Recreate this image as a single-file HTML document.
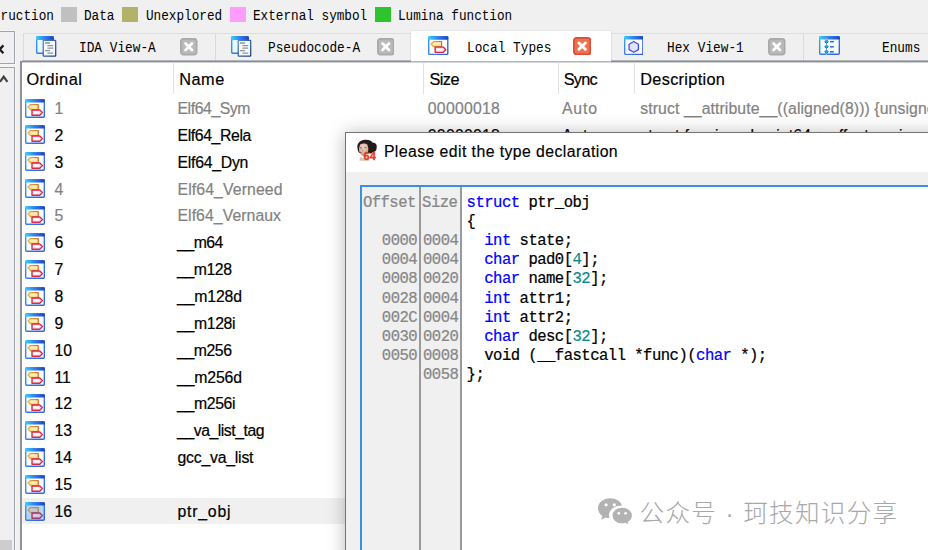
<!DOCTYPE html>
<html lang="en">
<head>
<meta charset="utf-8">
<title>Local Types</title>
<style>
html,body{margin:0;padding:0;}
body{width:928px;height:550px;overflow:hidden;background:#f0f0f0;position:relative;font-family:"Liberation Sans",sans-serif;color:#000;}
.abs{position:absolute;}
.mono{font-family:"Liberation Mono",monospace;}
/* legend */
.lg{position:absolute;top:8.7px;height:16px;line-height:16px;font-family:"Liberation Mono",monospace;font-size:12.7px;white-space:pre;color:#000;transform:scaleY(1.14);transform-origin:0 50%;}
.sw{position:absolute;top:6.5px;width:16px;height:15px;}
/* left gutter */
.gbox{position:absolute;left:-3.7px;width:16.4px;border:1.3px solid #9fa3aa;background:#f0f0f0;box-shadow:0 0 0 1px #f7f7f7;}
/* tabs */
#tabbar{position:absolute;left:23px;top:33.4px;width:910px;height:27px;border-top:1px solid #dddddd;border-left:1px solid #dcdcdc;background:#f0f0f0;}
.tsep{position:absolute;top:34px;width:1px;height:26px;background:#dadada;}
.ttxt{position:absolute;top:40.4px;height:18px;line-height:18px;font-family:"Liberation Mono",monospace;font-size:12.8px;white-space:pre;color:#000;transform:scaleY(1.08);transform-origin:0 50%;}
.tclose{position:absolute;top:38.3px;width:14.6px;height:14.6px;border:1.7px solid #a9a9a9;border-radius:2.6px;background:#bababa;}
.tclose.red{background:#e9704e;border-color:#de4c38;top:36.8px;width:14.9px;height:14.9px;}
.tclose svg{position:absolute;left:-0.7px;top:-0.7px;}
#acttab{position:absolute;left:411px;top:31px;width:200px;height:30px;background:#fff;box-shadow:0 -1px 0 0 #e6e6e6,-1px 0 0 0 #e2e2e2,1px 0 0 0 #e2e2e2;}
/* list */
#list{position:absolute;left:19.6px;top:60.6px;width:920px;height:500px;background:#fff;border-left:2px solid #8d9198;}
#hline{position:absolute;left:22px;top:60px;width:910px;height:3px;background:linear-gradient(#b2b5bb 0,#b2b5bb 33.3%,#868b94 33.3%,#868b94 66.6%,#cfd1d5 66.6%,#cfd1d5 100%);}
#hline2{position:absolute;left:411px;top:60px;width:200px;height:3px;background:linear-gradient(#fff 0,#fff 33.3%,#b2b6bd 33.3%,#b2b6bd 66.6%,#d2d5d9 66.6%,#d2d5d9 100%);}
.hsep{position:absolute;top:62px;width:1px;height:32px;background:#e0e0e0;}
.hd{position:absolute;top:67.6px;height:22px;line-height:22px;font-size:16.3px;white-space:pre;color:#000;-webkit-text-stroke:0.2px #000;}
.row{position:absolute;left:22px;width:906px;height:26px;}
.c{position:absolute;top:0.9px;height:26px;line-height:26px;font-size:15.8px;white-space:pre;-webkit-text-stroke:0.2px currentColor;}
.g .c{color:#828282;}
.ico{position:absolute;left:3.4px;top:3.5px;width:20px;height:19px;}
/* dialog */
#dlg{position:absolute;left:345px;top:131.6px;width:640px;height:460px;background:#f0f0f0;border:1px solid #747474;box-shadow:0 1px 17px 0 rgba(0,0,0,.27);}
#dtitle{position:absolute;left:0;top:0;width:100%;height:39px;background:#fff;}
#dtitle span{position:absolute;left:37.9px;top:9.6px;height:20px;line-height:20px;font-size:15.8px;letter-spacing:0.43px;white-space:pre;-webkit-text-stroke:0.15px #000;}
#ed{position:absolute;left:14.3px;top:52.6px;width:640px;height:420px;border:2.1px solid #3c8fdc;background:#fff;}
#ed .col1{position:absolute;left:0;top:0;width:56.8px;height:100%;background:#f0f0f0;border-right:2px solid #9a9a9a;}
#ed .col2{position:absolute;left:58.8px;top:0;width:38.7px;height:100%;background:#f0f0f0;border-right:2px solid #9a9a9a;}
.ln{position:absolute;left:0;height:19px;line-height:19px;font-family:"Liberation Mono",monospace;font-size:15.6px;letter-spacing:-0.532px;white-space:pre;-webkit-text-stroke:0.22px currentColor;}
.ln span{position:absolute;top:0;}
.of{left:1.9px;color:#868686;}
.sz{left:60.7px;color:#868686;}
.cd{left:104.3px;color:#000;}
.k{color:#0000ff;font-style:normal;}
.n{color:#0a8a8a;font-style:normal;}
/* watermark */
#wm{position:absolute;left:639.5px;top:498.9px;height:30px;line-height:30px;font-family:"Liberation Sans","Noto Sans CJK SC",sans-serif;font-size:24.6px;letter-spacing:1.3px;word-spacing:0.1px;font-weight:300;color:#a8a8a8;white-space:pre;}
</style>
</head>
<body>
<!-- legend strip -->
<div class="lg" style="left:-7px">truction</div>
<div class="sw" style="left:61px;background:#c0c0c0"></div>
<div class="lg" style="left:84px">Data</div>
<div class="sw" style="left:122px;background:#b2b26a"></div>
<div class="lg" style="left:146px">Unexplored</div>
<div class="sw" style="left:230px;background:#ff9cff"></div>
<div class="lg" style="left:253px">External symbol</div>
<div class="sw" style="left:375px;background:#2ec42e"></div>
<div class="lg" style="left:398px">Lumina function</div>

<!-- left gutter -->
<div class="gbox" style="top:31px;height:31px"></div>
<div class="gbox" style="top:67px;height:500px"></div>
<div class="abs" style="left:0;top:539.5px;width:12.3px;height:12px;background:#cdcdcd"></div>
<svg class="abs" style="left:0;top:40px" width="14" height="50" viewBox="0 0 14 50">
  <path d="M-4 5.4 L3.4 13.2 M3.4 5.4 L-4 13.2" stroke="#1c1c1c" stroke-width="2.3" fill="none"/>
  <path d="M0 41.8 L3.7 36.7 L7.4 41.8" stroke="#404040" stroke-width="2.2" fill="none"/>
</svg>

<!-- tab bar -->
<div id="tabbar"></div>
<div id="acttab"></div>
<div id="list"></div>
<div id="hline"></div>
<div id="hline2"></div>
<div class="tsep" style="left:215px"></div>
<div class="tsep" style="left:803px"></div>

<div class="ttxt" style="left:79px">IDA View-A</div>
<div class="ttxt" style="left:268px">Pseudocode-A</div>
<div class="ttxt" style="left:467px">Local Types</div>
<div class="ttxt" style="left:667px">Hex View-1</div>
<div class="ttxt" style="left:882px">Enums</div>


<svg class="abs" style="left:180.4px;top:38.4px" width="17.5" height="17.5" viewBox="0 0 17.5 17.5"><rect x="0.85" y="0.85" width="15.8" height="15.8" rx="2.6" fill="#bababa" stroke="#a9a9a9" stroke-width="1.7"/><path d="M5.55 5.55L11.95 11.95M11.95 5.55L5.55 11.95" stroke="#fff" stroke-width="2.7" stroke-linecap="round"/></svg>
<svg class="abs" style="left:376.9px;top:38.4px" width="17.5" height="17.5" viewBox="0 0 17.5 17.5"><rect x="0.85" y="0.85" width="15.8" height="15.8" rx="2.6" fill="#bababa" stroke="#a9a9a9" stroke-width="1.7"/><path d="M5.55 5.55L11.95 11.95M11.95 5.55L5.55 11.95" stroke="#fff" stroke-width="2.7" stroke-linecap="round"/></svg>
<svg class="abs" style="left:572.5px;top:36.7px" width="18.3" height="18.3" viewBox="0 0 18.3 18.3"><rect x="0.9" y="0.9" width="16.5" height="16.5" rx="2.6" fill="#ea7450" stroke="#de4c38" stroke-width="1.8"/><path d="M5.95 5.95L12.350000000000001 12.350000000000001M12.350000000000001 5.95L5.95 12.350000000000001" stroke="#fff" stroke-width="2.9" stroke-linecap="round"/></svg>
<svg class="abs" style="left:768.2px;top:38.4px" width="17.5" height="17.5" viewBox="0 0 17.5 17.5"><rect x="0.85" y="0.85" width="15.8" height="15.8" rx="2.6" fill="#bababa" stroke="#a9a9a9" stroke-width="1.7"/><path d="M5.55 5.55L11.95 11.95M11.95 5.55L5.55 11.95" stroke="#fff" stroke-width="2.7" stroke-linecap="round"/></svg>
<svg class="abs" style="left:35.7px;top:35.7px" width="21" height="21" viewBox="0 0 21 21"><defs><linearGradient id="tb1" x1="0" y1="0" x2="1" y2="0"><stop offset="0" stop-color="#38d4ff"/><stop offset=".45" stop-color="#2f86ea"/><stop offset="1" stop-color="#1f3fc8"/></linearGradient><linearGradient id="fr1" x1="0" y1="0" x2="1" y2="1"><stop offset="0" stop-color="#3f9ff2"/><stop offset="1" stop-color="#3460dc"/></linearGradient></defs><rect x="0.7" y="0.7" width="16.6" height="16.6" rx="1" fill="#e8fbff" stroke="url(#fr1)" stroke-width="1.4"/><rect x="0.2" y="0.2" width="17.6" height="3.8" rx="0.8" fill="url(#tb1)"/><linearGradient id="dg1" x1="0" y1="0" x2="1" y2="1"><stop offset="0" stop-color="#4f84c8"/><stop offset="1" stop-color="#173f7c"/></linearGradient><rect x="7.2" y="4.4" width="12.5" height="15.6" rx=".6" fill="#f6faff" stroke="url(#dg1)" stroke-width="1.25"/><path d="M9 7H14M11.4 9.7H17.2M11.4 12.2H17.2M9 14.6H14M11.4 17.1H17.2" stroke="#8c949c" stroke-width="1.3"/></svg>
<svg class="abs" style="left:231.4px;top:35.7px" width="21" height="21" viewBox="0 0 21 21"><defs><linearGradient id="tb2" x1="0" y1="0" x2="1" y2="0"><stop offset="0" stop-color="#38d4ff"/><stop offset=".45" stop-color="#2f86ea"/><stop offset="1" stop-color="#1f3fc8"/></linearGradient><linearGradient id="fr2" x1="0" y1="0" x2="1" y2="1"><stop offset="0" stop-color="#3f9ff2"/><stop offset="1" stop-color="#3460dc"/></linearGradient></defs><rect x="0.7" y="0.7" width="16.6" height="16.6" rx="1" fill="#e8fbff" stroke="url(#fr2)" stroke-width="1.4"/><rect x="0.2" y="0.2" width="17.6" height="3.8" rx="0.8" fill="url(#tb2)"/><linearGradient id="dg2" x1="0" y1="0" x2="1" y2="1"><stop offset="0" stop-color="#4f84c8"/><stop offset="1" stop-color="#173f7c"/></linearGradient><rect x="7.2" y="4.4" width="12.5" height="15.6" rx=".6" fill="#f6faff" stroke="url(#dg2)" stroke-width="1.25"/><path d="M9 7H14M11.4 9.7H17.2M11.4 12.2H17.2M9 14.6H14M11.4 17.1H17.2" stroke="#8c949c" stroke-width="1.3"/></svg>
<svg class="abs" style="left:428.4px;top:36px" width="20.5" height="19.2" viewBox="0 0 20 19" preserveAspectRatio="none"><defs><linearGradient id="tb3" x1="0" y1="0" x2="1" y2="0"><stop offset="0" stop-color="#38d4ff"/><stop offset=".45" stop-color="#2f86ea"/><stop offset="1" stop-color="#1f3fc8"/></linearGradient><linearGradient id="fr3" x1="0" y1="0" x2="1" y2="1"><stop offset="0" stop-color="#3f9ff2"/><stop offset="1" stop-color="#3460dc"/></linearGradient><linearGradient id="og3" x1="0" y1="0" x2="1" y2="0"><stop offset="0" stop-color="#eeb040"/><stop offset="1" stop-color="#de6c1c"/></linearGradient><linearGradient id="of3" x1="0" y1="0" x2="0" y2="1"><stop offset="0" stop-color="#fffdf0"/><stop offset="1" stop-color="#ffdc70"/></linearGradient></defs><rect x="0.7" y="0.7" width="18.6" height="17.6" rx="1" fill="#fdffff" stroke="url(#fr3)" stroke-width="1.4"/><rect x="0.2" y="0.2" width="19.6" height="3.4" rx="0.8" fill="url(#tb3)"/><path d="M3 8 L5.6 5.6 H13.2 V10.6 H5.6 Z" fill="url(#of3)" stroke="url(#og3)" stroke-width="1.3" stroke-linejoin="round"/><path d="M7 11 H14.8 L17.4 13.6 L14.8 16.2 H7 Z" fill="#fbe4ea" stroke="#d22e4c" stroke-width="1.4" stroke-linejoin="round"/><path d="M8.6 13.6H14" stroke="#fff" stroke-width="1.6" opacity="0.9"/></svg>
<svg class="abs" style="left:623.5px;top:35.8px" width="19.5" height="19.1" viewBox="0 0 20 19" preserveAspectRatio="none"><defs><linearGradient id="tb4" x1="0" y1="0" x2="1" y2="0"><stop offset="0" stop-color="#38d4ff"/><stop offset=".45" stop-color="#2f86ea"/><stop offset="1" stop-color="#1f3fc8"/></linearGradient><linearGradient id="fr4" x1="0" y1="0" x2="1" y2="1"><stop offset="0" stop-color="#3f9ff2"/><stop offset="1" stop-color="#3460dc"/></linearGradient></defs><rect x="0.7" y="0.7" width="18.6" height="17.6" rx="1" fill="#fff" stroke="url(#fr4)" stroke-width="1.4"/><rect x="0.2" y="0.2" width="19.6" height="3.4" rx="0.8" fill="url(#tb4)"/><path d="M10 5.5 L14.8 8.2 V13.5 L10 16.2 L5.2 13.5 V8.2 Z" fill="#dde9fb" stroke="#4848ff" stroke-width="1.35" stroke-linejoin="round"/></svg>
<svg class="abs" style="left:819.1px;top:35.8px" width="21" height="19" viewBox="0 0 21 19"><defs><linearGradient id="tb5" x1="0" y1="0" x2="1" y2="0"><stop offset="0" stop-color="#38d4ff"/><stop offset=".45" stop-color="#2f86ea"/><stop offset="1" stop-color="#1f3fc8"/></linearGradient><linearGradient id="fr5" x1="0" y1="0" x2="1" y2="1"><stop offset="0" stop-color="#3f9ff2"/><stop offset="1" stop-color="#3460dc"/></linearGradient></defs><rect x="0.7" y="0.7" width="19.6" height="17.6" rx="1" fill="#f4fdff" stroke="url(#fr5)" stroke-width="1.4"/><rect x="0.2" y="0.2" width="20.6" height="3.4" rx="0.8" fill="url(#tb5)"/><path d="M7.5 2V19" stroke="#d8c8f4" stroke-width="0.8"/><path d="M7.5 3.9000000000000004 L9.3 5.7 L7.5 7.5 L5.7 5.7 Z" fill="#00b4e6" stroke="#2a6cd8" stroke-width="1"/><path d="M11 5.7H14.8" stroke="#2a62de" stroke-width="1.5"/><path d="M7.5 9.0 L9.3 10.8 L7.5 12.600000000000001 L5.7 10.8 Z" fill="#00b4e6" stroke="#2a6cd8" stroke-width="1"/><path d="M11 10.8H14.8" stroke="#2a62de" stroke-width="1.5"/><path d="M7.5 14.0 L9.3 15.8 L7.5 17.6 L5.7 15.8 Z" fill="#00b4e6" stroke="#2a6cd8" stroke-width="1"/><path d="M11 15.8H14.8" stroke="#2a62de" stroke-width="1.5"/></svg>

<!-- list header -->
<div class="hsep" style="left:173px"></div>
<div class="hsep" style="left:423px"></div>
<div class="hsep" style="left:558px"></div>
<div class="hsep" style="left:634px"></div>

<div class="hd" style="left:26.4px;letter-spacing:0.492px">Ordinal</div>
<div class="hd" style="left:179.2px;letter-spacing:0.540px">Name</div>
<div class="hd" style="left:429.4px;letter-spacing:-0.536px">Size</div>
<div class="hd" style="left:563.7px;letter-spacing:-0.779px">Sync</div>
<div class="hd" style="left:640.3px;letter-spacing:0.307px">Description</div>
<div class="row g" style="top:95.00px"><svg class="ico" style="" width="20.5" height="19.2" viewBox="0 0 20 19" preserveAspectRatio="none"><defs><linearGradient id="tb6" x1="0" y1="0" x2="1" y2="0"><stop offset="0" stop-color="#38d4ff"/><stop offset=".45" stop-color="#2f86ea"/><stop offset="1" stop-color="#1f3fc8"/></linearGradient><linearGradient id="fr6" x1="0" y1="0" x2="1" y2="1"><stop offset="0" stop-color="#3f9ff2"/><stop offset="1" stop-color="#3460dc"/></linearGradient><linearGradient id="og6" x1="0" y1="0" x2="1" y2="0"><stop offset="0" stop-color="#eeb040"/><stop offset="1" stop-color="#de6c1c"/></linearGradient><linearGradient id="of6" x1="0" y1="0" x2="0" y2="1"><stop offset="0" stop-color="#fffdf0"/><stop offset="1" stop-color="#ffdc70"/></linearGradient></defs><rect x="0.7" y="0.7" width="18.6" height="17.6" rx="1" fill="#fdffff" stroke="url(#fr6)" stroke-width="1.4"/><rect x="0.2" y="0.2" width="19.6" height="3.4" rx="0.8" fill="url(#tb6)"/><path d="M3 8 L5.6 5.6 H13.2 V10.6 H5.6 Z" fill="url(#of6)" stroke="url(#og6)" stroke-width="1.3" stroke-linejoin="round"/><path d="M7 11 H14.8 L17.4 13.6 L14.8 16.2 H7 Z" fill="#fbe4ea" stroke="#d22e4c" stroke-width="1.4" stroke-linejoin="round"/><path d="M8.6 13.6H14" stroke="#fff" stroke-width="1.6" opacity="0.9"/></svg><span class="c" style="left:32.4px">1</span><span class="c" style="left:155.5px;letter-spacing:-0.425px">Elf64_Sym</span><span class="c" style="left:405.8px;letter-spacing:0.257px">00000018</span><span class="c" style="left:539.9px;letter-spacing:0.899px">Auto</span><span class="c" style="left:618.3px;letter-spacing:0.090px">struct __attribute__((aligned(8))) {unsigne</span></div>
<div class="row" style="top:121.87px"><svg class="ico" style="" width="20.5" height="19.2" viewBox="0 0 20 19" preserveAspectRatio="none"><defs><linearGradient id="tb7" x1="0" y1="0" x2="1" y2="0"><stop offset="0" stop-color="#38d4ff"/><stop offset=".45" stop-color="#2f86ea"/><stop offset="1" stop-color="#1f3fc8"/></linearGradient><linearGradient id="fr7" x1="0" y1="0" x2="1" y2="1"><stop offset="0" stop-color="#3f9ff2"/><stop offset="1" stop-color="#3460dc"/></linearGradient><linearGradient id="og7" x1="0" y1="0" x2="1" y2="0"><stop offset="0" stop-color="#eeb040"/><stop offset="1" stop-color="#de6c1c"/></linearGradient><linearGradient id="of7" x1="0" y1="0" x2="0" y2="1"><stop offset="0" stop-color="#fffdf0"/><stop offset="1" stop-color="#ffdc70"/></linearGradient></defs><rect x="0.7" y="0.7" width="18.6" height="17.6" rx="1" fill="#fdffff" stroke="url(#fr7)" stroke-width="1.4"/><rect x="0.2" y="0.2" width="19.6" height="3.4" rx="0.8" fill="url(#tb7)"/><path d="M3 8 L5.6 5.6 H13.2 V10.6 H5.6 Z" fill="url(#of7)" stroke="url(#og7)" stroke-width="1.3" stroke-linejoin="round"/><path d="M7 11 H14.8 L17.4 13.6 L14.8 16.2 H7 Z" fill="#fbe4ea" stroke="#d22e4c" stroke-width="1.4" stroke-linejoin="round"/><path d="M8.6 13.6H14" stroke="#fff" stroke-width="1.6" opacity="0.9"/></svg><span class="c" style="left:32.4px">2</span><span class="c" style="left:155.5px;letter-spacing:-0.388px">Elf64_Rela</span><span class="c" style="left:405.8px;letter-spacing:0.257px">00000018</span><span class="c" style="left:539.9px;letter-spacing:0.899px">Auto</span><span class="c" style="left:618.3px;letter-spacing:0.090px">struct {unsigned __int64 r_offset;unsigne</span></div>
<div class="row" style="top:148.74px"><svg class="ico" style="" width="20.5" height="19.2" viewBox="0 0 20 19" preserveAspectRatio="none"><defs><linearGradient id="tb8" x1="0" y1="0" x2="1" y2="0"><stop offset="0" stop-color="#38d4ff"/><stop offset=".45" stop-color="#2f86ea"/><stop offset="1" stop-color="#1f3fc8"/></linearGradient><linearGradient id="fr8" x1="0" y1="0" x2="1" y2="1"><stop offset="0" stop-color="#3f9ff2"/><stop offset="1" stop-color="#3460dc"/></linearGradient><linearGradient id="og8" x1="0" y1="0" x2="1" y2="0"><stop offset="0" stop-color="#eeb040"/><stop offset="1" stop-color="#de6c1c"/></linearGradient><linearGradient id="of8" x1="0" y1="0" x2="0" y2="1"><stop offset="0" stop-color="#fffdf0"/><stop offset="1" stop-color="#ffdc70"/></linearGradient></defs><rect x="0.7" y="0.7" width="18.6" height="17.6" rx="1" fill="#fdffff" stroke="url(#fr8)" stroke-width="1.4"/><rect x="0.2" y="0.2" width="19.6" height="3.4" rx="0.8" fill="url(#tb8)"/><path d="M3 8 L5.6 5.6 H13.2 V10.6 H5.6 Z" fill="url(#of8)" stroke="url(#og8)" stroke-width="1.3" stroke-linejoin="round"/><path d="M7 11 H14.8 L17.4 13.6 L14.8 16.2 H7 Z" fill="#fbe4ea" stroke="#d22e4c" stroke-width="1.4" stroke-linejoin="round"/><path d="M8.6 13.6H14" stroke="#fff" stroke-width="1.6" opacity="0.9"/></svg><span class="c" style="left:32.4px">3</span><span class="c" style="left:155.5px;letter-spacing:-0.250px">Elf64_Dyn</span></div>
<div class="row g" style="top:175.61px"><svg class="ico" style="" width="20.5" height="19.2" viewBox="0 0 20 19" preserveAspectRatio="none"><defs><linearGradient id="tb9" x1="0" y1="0" x2="1" y2="0"><stop offset="0" stop-color="#38d4ff"/><stop offset=".45" stop-color="#2f86ea"/><stop offset="1" stop-color="#1f3fc8"/></linearGradient><linearGradient id="fr9" x1="0" y1="0" x2="1" y2="1"><stop offset="0" stop-color="#3f9ff2"/><stop offset="1" stop-color="#3460dc"/></linearGradient><linearGradient id="og9" x1="0" y1="0" x2="1" y2="0"><stop offset="0" stop-color="#eeb040"/><stop offset="1" stop-color="#de6c1c"/></linearGradient><linearGradient id="of9" x1="0" y1="0" x2="0" y2="1"><stop offset="0" stop-color="#fffdf0"/><stop offset="1" stop-color="#ffdc70"/></linearGradient></defs><rect x="0.7" y="0.7" width="18.6" height="17.6" rx="1" fill="#fdffff" stroke="url(#fr9)" stroke-width="1.4"/><rect x="0.2" y="0.2" width="19.6" height="3.4" rx="0.8" fill="url(#tb9)"/><path d="M3 8 L5.6 5.6 H13.2 V10.6 H5.6 Z" fill="url(#of9)" stroke="url(#og9)" stroke-width="1.3" stroke-linejoin="round"/><path d="M7 11 H14.8 L17.4 13.6 L14.8 16.2 H7 Z" fill="#fbe4ea" stroke="#d22e4c" stroke-width="1.4" stroke-linejoin="round"/><path d="M8.6 13.6H14" stroke="#fff" stroke-width="1.6" opacity="0.9"/></svg><span class="c" style="left:32.4px">4</span><span class="c" style="left:155.5px;letter-spacing:0.111px">Elf64_Verneed</span></div>
<div class="row g" style="top:202.48px"><svg class="ico" style="" width="20.5" height="19.2" viewBox="0 0 20 19" preserveAspectRatio="none"><defs><linearGradient id="tb10" x1="0" y1="0" x2="1" y2="0"><stop offset="0" stop-color="#38d4ff"/><stop offset=".45" stop-color="#2f86ea"/><stop offset="1" stop-color="#1f3fc8"/></linearGradient><linearGradient id="fr10" x1="0" y1="0" x2="1" y2="1"><stop offset="0" stop-color="#3f9ff2"/><stop offset="1" stop-color="#3460dc"/></linearGradient><linearGradient id="og10" x1="0" y1="0" x2="1" y2="0"><stop offset="0" stop-color="#eeb040"/><stop offset="1" stop-color="#de6c1c"/></linearGradient><linearGradient id="of10" x1="0" y1="0" x2="0" y2="1"><stop offset="0" stop-color="#fffdf0"/><stop offset="1" stop-color="#ffdc70"/></linearGradient></defs><rect x="0.7" y="0.7" width="18.6" height="17.6" rx="1" fill="#fdffff" stroke="url(#fr10)" stroke-width="1.4"/><rect x="0.2" y="0.2" width="19.6" height="3.4" rx="0.8" fill="url(#tb10)"/><path d="M3 8 L5.6 5.6 H13.2 V10.6 H5.6 Z" fill="url(#of10)" stroke="url(#og10)" stroke-width="1.3" stroke-linejoin="round"/><path d="M7 11 H14.8 L17.4 13.6 L14.8 16.2 H7 Z" fill="#fbe4ea" stroke="#d22e4c" stroke-width="1.4" stroke-linejoin="round"/><path d="M8.6 13.6H14" stroke="#fff" stroke-width="1.6" opacity="0.9"/></svg><span class="c" style="left:32.4px">5</span><span class="c" style="left:155.5px;letter-spacing:0.060px">Elf64_Vernaux</span></div>
<div class="row" style="top:229.35px"><svg class="ico" style="" width="20.5" height="19.2" viewBox="0 0 20 19" preserveAspectRatio="none"><defs><linearGradient id="tb11" x1="0" y1="0" x2="1" y2="0"><stop offset="0" stop-color="#38d4ff"/><stop offset=".45" stop-color="#2f86ea"/><stop offset="1" stop-color="#1f3fc8"/></linearGradient><linearGradient id="fr11" x1="0" y1="0" x2="1" y2="1"><stop offset="0" stop-color="#3f9ff2"/><stop offset="1" stop-color="#3460dc"/></linearGradient><linearGradient id="og11" x1="0" y1="0" x2="1" y2="0"><stop offset="0" stop-color="#eeb040"/><stop offset="1" stop-color="#de6c1c"/></linearGradient><linearGradient id="of11" x1="0" y1="0" x2="0" y2="1"><stop offset="0" stop-color="#fffdf0"/><stop offset="1" stop-color="#ffdc70"/></linearGradient></defs><rect x="0.7" y="0.7" width="18.6" height="17.6" rx="1" fill="#fdffff" stroke="url(#fr11)" stroke-width="1.4"/><rect x="0.2" y="0.2" width="19.6" height="3.4" rx="0.8" fill="url(#tb11)"/><path d="M3 8 L5.6 5.6 H13.2 V10.6 H5.6 Z" fill="url(#of11)" stroke="url(#og11)" stroke-width="1.3" stroke-linejoin="round"/><path d="M7 11 H14.8 L17.4 13.6 L14.8 16.2 H7 Z" fill="#fbe4ea" stroke="#d22e4c" stroke-width="1.4" stroke-linejoin="round"/><path d="M8.6 13.6H14" stroke="#fff" stroke-width="1.6" opacity="0.9"/></svg><span class="c" style="left:32.4px">6</span><span class="c" style="left:155.1px;letter-spacing:-0.503px">__m64</span></div>
<div class="row" style="top:256.22px"><svg class="ico" style="" width="20.5" height="19.2" viewBox="0 0 20 19" preserveAspectRatio="none"><defs><linearGradient id="tb12" x1="0" y1="0" x2="1" y2="0"><stop offset="0" stop-color="#38d4ff"/><stop offset=".45" stop-color="#2f86ea"/><stop offset="1" stop-color="#1f3fc8"/></linearGradient><linearGradient id="fr12" x1="0" y1="0" x2="1" y2="1"><stop offset="0" stop-color="#3f9ff2"/><stop offset="1" stop-color="#3460dc"/></linearGradient><linearGradient id="og12" x1="0" y1="0" x2="1" y2="0"><stop offset="0" stop-color="#eeb040"/><stop offset="1" stop-color="#de6c1c"/></linearGradient><linearGradient id="of12" x1="0" y1="0" x2="0" y2="1"><stop offset="0" stop-color="#fffdf0"/><stop offset="1" stop-color="#ffdc70"/></linearGradient></defs><rect x="0.7" y="0.7" width="18.6" height="17.6" rx="1" fill="#fdffff" stroke="url(#fr12)" stroke-width="1.4"/><rect x="0.2" y="0.2" width="19.6" height="3.4" rx="0.8" fill="url(#tb12)"/><path d="M3 8 L5.6 5.6 H13.2 V10.6 H5.6 Z" fill="url(#of12)" stroke="url(#og12)" stroke-width="1.3" stroke-linejoin="round"/><path d="M7 11 H14.8 L17.4 13.6 L14.8 16.2 H7 Z" fill="#fbe4ea" stroke="#d22e4c" stroke-width="1.4" stroke-linejoin="round"/><path d="M8.6 13.6H14" stroke="#fff" stroke-width="1.6" opacity="0.9"/></svg><span class="c" style="left:32.4px">7</span><span class="c" style="left:155.1px;letter-spacing:-0.440px">__m128</span></div>
<div class="row" style="top:283.09px"><svg class="ico" style="" width="20.5" height="19.2" viewBox="0 0 20 19" preserveAspectRatio="none"><defs><linearGradient id="tb13" x1="0" y1="0" x2="1" y2="0"><stop offset="0" stop-color="#38d4ff"/><stop offset=".45" stop-color="#2f86ea"/><stop offset="1" stop-color="#1f3fc8"/></linearGradient><linearGradient id="fr13" x1="0" y1="0" x2="1" y2="1"><stop offset="0" stop-color="#3f9ff2"/><stop offset="1" stop-color="#3460dc"/></linearGradient><linearGradient id="og13" x1="0" y1="0" x2="1" y2="0"><stop offset="0" stop-color="#eeb040"/><stop offset="1" stop-color="#de6c1c"/></linearGradient><linearGradient id="of13" x1="0" y1="0" x2="0" y2="1"><stop offset="0" stop-color="#fffdf0"/><stop offset="1" stop-color="#ffdc70"/></linearGradient></defs><rect x="0.7" y="0.7" width="18.6" height="17.6" rx="1" fill="#fdffff" stroke="url(#fr13)" stroke-width="1.4"/><rect x="0.2" y="0.2" width="19.6" height="3.4" rx="0.8" fill="url(#tb13)"/><path d="M3 8 L5.6 5.6 H13.2 V10.6 H5.6 Z" fill="url(#of13)" stroke="url(#og13)" stroke-width="1.3" stroke-linejoin="round"/><path d="M7 11 H14.8 L17.4 13.6 L14.8 16.2 H7 Z" fill="#fbe4ea" stroke="#d22e4c" stroke-width="1.4" stroke-linejoin="round"/><path d="M8.6 13.6H14" stroke="#fff" stroke-width="1.6" opacity="0.9"/></svg><span class="c" style="left:32.4px">8</span><span class="c" style="left:155.1px;letter-spacing:-0.164px">__m128d</span></div>
<div class="row" style="top:309.96px"><svg class="ico" style="" width="20.5" height="19.2" viewBox="0 0 20 19" preserveAspectRatio="none"><defs><linearGradient id="tb14" x1="0" y1="0" x2="1" y2="0"><stop offset="0" stop-color="#38d4ff"/><stop offset=".45" stop-color="#2f86ea"/><stop offset="1" stop-color="#1f3fc8"/></linearGradient><linearGradient id="fr14" x1="0" y1="0" x2="1" y2="1"><stop offset="0" stop-color="#3f9ff2"/><stop offset="1" stop-color="#3460dc"/></linearGradient><linearGradient id="og14" x1="0" y1="0" x2="1" y2="0"><stop offset="0" stop-color="#eeb040"/><stop offset="1" stop-color="#de6c1c"/></linearGradient><linearGradient id="of14" x1="0" y1="0" x2="0" y2="1"><stop offset="0" stop-color="#fffdf0"/><stop offset="1" stop-color="#ffdc70"/></linearGradient></defs><rect x="0.7" y="0.7" width="18.6" height="17.6" rx="1" fill="#fdffff" stroke="url(#fr14)" stroke-width="1.4"/><rect x="0.2" y="0.2" width="19.6" height="3.4" rx="0.8" fill="url(#tb14)"/><path d="M3 8 L5.6 5.6 H13.2 V10.6 H5.6 Z" fill="url(#of14)" stroke="url(#og14)" stroke-width="1.3" stroke-linejoin="round"/><path d="M7 11 H14.8 L17.4 13.6 L14.8 16.2 H7 Z" fill="#fbe4ea" stroke="#d22e4c" stroke-width="1.4" stroke-linejoin="round"/><path d="M8.6 13.6H14" stroke="#fff" stroke-width="1.6" opacity="0.9"/></svg><span class="c" style="left:32.4px">9</span><span class="c" style="left:155.1px;letter-spacing:-0.368px">__m128i</span></div>
<div class="row" style="top:336.83px"><svg class="ico" style="" width="20.5" height="19.2" viewBox="0 0 20 19" preserveAspectRatio="none"><defs><linearGradient id="tb15" x1="0" y1="0" x2="1" y2="0"><stop offset="0" stop-color="#38d4ff"/><stop offset=".45" stop-color="#2f86ea"/><stop offset="1" stop-color="#1f3fc8"/></linearGradient><linearGradient id="fr15" x1="0" y1="0" x2="1" y2="1"><stop offset="0" stop-color="#3f9ff2"/><stop offset="1" stop-color="#3460dc"/></linearGradient><linearGradient id="og15" x1="0" y1="0" x2="1" y2="0"><stop offset="0" stop-color="#eeb040"/><stop offset="1" stop-color="#de6c1c"/></linearGradient><linearGradient id="of15" x1="0" y1="0" x2="0" y2="1"><stop offset="0" stop-color="#fffdf0"/><stop offset="1" stop-color="#ffdc70"/></linearGradient></defs><rect x="0.7" y="0.7" width="18.6" height="17.6" rx="1" fill="#fdffff" stroke="url(#fr15)" stroke-width="1.4"/><rect x="0.2" y="0.2" width="19.6" height="3.4" rx="0.8" fill="url(#tb15)"/><path d="M3 8 L5.6 5.6 H13.2 V10.6 H5.6 Z" fill="url(#of15)" stroke="url(#og15)" stroke-width="1.3" stroke-linejoin="round"/><path d="M7 11 H14.8 L17.4 13.6 L14.8 16.2 H7 Z" fill="#fbe4ea" stroke="#d22e4c" stroke-width="1.4" stroke-linejoin="round"/><path d="M8.6 13.6H14" stroke="#fff" stroke-width="1.6" opacity="0.9"/></svg><span class="c" style="left:32.5px">10</span><span class="c" style="left:155.1px;letter-spacing:-0.440px">__m256</span></div>
<div class="row" style="top:363.70px"><svg class="ico" style="" width="20.5" height="19.2" viewBox="0 0 20 19" preserveAspectRatio="none"><defs><linearGradient id="tb16" x1="0" y1="0" x2="1" y2="0"><stop offset="0" stop-color="#38d4ff"/><stop offset=".45" stop-color="#2f86ea"/><stop offset="1" stop-color="#1f3fc8"/></linearGradient><linearGradient id="fr16" x1="0" y1="0" x2="1" y2="1"><stop offset="0" stop-color="#3f9ff2"/><stop offset="1" stop-color="#3460dc"/></linearGradient><linearGradient id="og16" x1="0" y1="0" x2="1" y2="0"><stop offset="0" stop-color="#eeb040"/><stop offset="1" stop-color="#de6c1c"/></linearGradient><linearGradient id="of16" x1="0" y1="0" x2="0" y2="1"><stop offset="0" stop-color="#fffdf0"/><stop offset="1" stop-color="#ffdc70"/></linearGradient></defs><rect x="0.7" y="0.7" width="18.6" height="17.6" rx="1" fill="#fdffff" stroke="url(#fr16)" stroke-width="1.4"/><rect x="0.2" y="0.2" width="19.6" height="3.4" rx="0.8" fill="url(#tb16)"/><path d="M3 8 L5.6 5.6 H13.2 V10.6 H5.6 Z" fill="url(#of16)" stroke="url(#og16)" stroke-width="1.3" stroke-linejoin="round"/><path d="M7 11 H14.8 L17.4 13.6 L14.8 16.2 H7 Z" fill="#fbe4ea" stroke="#d22e4c" stroke-width="1.4" stroke-linejoin="round"/><path d="M8.6 13.6H14" stroke="#fff" stroke-width="1.6" opacity="0.9"/></svg><span class="c" style="left:32.5px">11</span><span class="c" style="left:155.1px;letter-spacing:-0.164px">__m256d</span></div>
<div class="row" style="top:390.57px"><svg class="ico" style="" width="20.5" height="19.2" viewBox="0 0 20 19" preserveAspectRatio="none"><defs><linearGradient id="tb17" x1="0" y1="0" x2="1" y2="0"><stop offset="0" stop-color="#38d4ff"/><stop offset=".45" stop-color="#2f86ea"/><stop offset="1" stop-color="#1f3fc8"/></linearGradient><linearGradient id="fr17" x1="0" y1="0" x2="1" y2="1"><stop offset="0" stop-color="#3f9ff2"/><stop offset="1" stop-color="#3460dc"/></linearGradient><linearGradient id="og17" x1="0" y1="0" x2="1" y2="0"><stop offset="0" stop-color="#eeb040"/><stop offset="1" stop-color="#de6c1c"/></linearGradient><linearGradient id="of17" x1="0" y1="0" x2="0" y2="1"><stop offset="0" stop-color="#fffdf0"/><stop offset="1" stop-color="#ffdc70"/></linearGradient></defs><rect x="0.7" y="0.7" width="18.6" height="17.6" rx="1" fill="#fdffff" stroke="url(#fr17)" stroke-width="1.4"/><rect x="0.2" y="0.2" width="19.6" height="3.4" rx="0.8" fill="url(#tb17)"/><path d="M3 8 L5.6 5.6 H13.2 V10.6 H5.6 Z" fill="url(#of17)" stroke="url(#og17)" stroke-width="1.3" stroke-linejoin="round"/><path d="M7 11 H14.8 L17.4 13.6 L14.8 16.2 H7 Z" fill="#fbe4ea" stroke="#d22e4c" stroke-width="1.4" stroke-linejoin="round"/><path d="M8.6 13.6H14" stroke="#fff" stroke-width="1.6" opacity="0.9"/></svg><span class="c" style="left:32.5px">12</span><span class="c" style="left:155.1px;letter-spacing:-0.368px">__m256i</span></div>
<div class="row" style="top:417.44px"><svg class="ico" style="" width="20.5" height="19.2" viewBox="0 0 20 19" preserveAspectRatio="none"><defs><linearGradient id="tb18" x1="0" y1="0" x2="1" y2="0"><stop offset="0" stop-color="#38d4ff"/><stop offset=".45" stop-color="#2f86ea"/><stop offset="1" stop-color="#1f3fc8"/></linearGradient><linearGradient id="fr18" x1="0" y1="0" x2="1" y2="1"><stop offset="0" stop-color="#3f9ff2"/><stop offset="1" stop-color="#3460dc"/></linearGradient><linearGradient id="og18" x1="0" y1="0" x2="1" y2="0"><stop offset="0" stop-color="#eeb040"/><stop offset="1" stop-color="#de6c1c"/></linearGradient><linearGradient id="of18" x1="0" y1="0" x2="0" y2="1"><stop offset="0" stop-color="#fffdf0"/><stop offset="1" stop-color="#ffdc70"/></linearGradient></defs><rect x="0.7" y="0.7" width="18.6" height="17.6" rx="1" fill="#fdffff" stroke="url(#fr18)" stroke-width="1.4"/><rect x="0.2" y="0.2" width="19.6" height="3.4" rx="0.8" fill="url(#tb18)"/><path d="M3 8 L5.6 5.6 H13.2 V10.6 H5.6 Z" fill="url(#of18)" stroke="url(#og18)" stroke-width="1.3" stroke-linejoin="round"/><path d="M7 11 H14.8 L17.4 13.6 L14.8 16.2 H7 Z" fill="#fbe4ea" stroke="#d22e4c" stroke-width="1.4" stroke-linejoin="round"/><path d="M8.6 13.6H14" stroke="#fff" stroke-width="1.6" opacity="0.9"/></svg><span class="c" style="left:32.5px">13</span><span class="c" style="left:155.1px;letter-spacing:-0.476px">__va_list_tag</span></div>
<div class="row" style="top:444.31px"><svg class="ico" style="" width="20.5" height="19.2" viewBox="0 0 20 19" preserveAspectRatio="none"><defs><linearGradient id="tb19" x1="0" y1="0" x2="1" y2="0"><stop offset="0" stop-color="#38d4ff"/><stop offset=".45" stop-color="#2f86ea"/><stop offset="1" stop-color="#1f3fc8"/></linearGradient><linearGradient id="fr19" x1="0" y1="0" x2="1" y2="1"><stop offset="0" stop-color="#3f9ff2"/><stop offset="1" stop-color="#3460dc"/></linearGradient><linearGradient id="og19" x1="0" y1="0" x2="1" y2="0"><stop offset="0" stop-color="#eeb040"/><stop offset="1" stop-color="#de6c1c"/></linearGradient><linearGradient id="of19" x1="0" y1="0" x2="0" y2="1"><stop offset="0" stop-color="#fffdf0"/><stop offset="1" stop-color="#ffdc70"/></linearGradient></defs><rect x="0.7" y="0.7" width="18.6" height="17.6" rx="1" fill="#fdffff" stroke="url(#fr19)" stroke-width="1.4"/><rect x="0.2" y="0.2" width="19.6" height="3.4" rx="0.8" fill="url(#tb19)"/><path d="M3 8 L5.6 5.6 H13.2 V10.6 H5.6 Z" fill="url(#of19)" stroke="url(#og19)" stroke-width="1.3" stroke-linejoin="round"/><path d="M7 11 H14.8 L17.4 13.6 L14.8 16.2 H7 Z" fill="#fbe4ea" stroke="#d22e4c" stroke-width="1.4" stroke-linejoin="round"/><path d="M8.6 13.6H14" stroke="#fff" stroke-width="1.6" opacity="0.9"/></svg><span class="c" style="left:32.5px">14</span><span class="c" style="left:155.5px;letter-spacing:-0.216px">gcc_va_list</span></div>
<div class="row" style="top:471.18px"><svg class="ico" style="" width="20.5" height="19.2" viewBox="0 0 20 19" preserveAspectRatio="none"><defs><linearGradient id="tb20" x1="0" y1="0" x2="1" y2="0"><stop offset="0" stop-color="#38d4ff"/><stop offset=".45" stop-color="#2f86ea"/><stop offset="1" stop-color="#1f3fc8"/></linearGradient><linearGradient id="fr20" x1="0" y1="0" x2="1" y2="1"><stop offset="0" stop-color="#3f9ff2"/><stop offset="1" stop-color="#3460dc"/></linearGradient><linearGradient id="og20" x1="0" y1="0" x2="1" y2="0"><stop offset="0" stop-color="#eeb040"/><stop offset="1" stop-color="#de6c1c"/></linearGradient><linearGradient id="of20" x1="0" y1="0" x2="0" y2="1"><stop offset="0" stop-color="#fffdf0"/><stop offset="1" stop-color="#ffdc70"/></linearGradient></defs><rect x="0.7" y="0.7" width="18.6" height="17.6" rx="1" fill="#fdffff" stroke="url(#fr20)" stroke-width="1.4"/><rect x="0.2" y="0.2" width="19.6" height="3.4" rx="0.8" fill="url(#tb20)"/><path d="M3 8 L5.6 5.6 H13.2 V10.6 H5.6 Z" fill="url(#of20)" stroke="url(#og20)" stroke-width="1.3" stroke-linejoin="round"/><path d="M7 11 H14.8 L17.4 13.6 L14.8 16.2 H7 Z" fill="#fbe4ea" stroke="#d22e4c" stroke-width="1.4" stroke-linejoin="round"/><path d="M8.6 13.6H14" stroke="#fff" stroke-width="1.6" opacity="0.9"/></svg><span class="c" style="left:32.5px">15</span></div>
<div class="row" style="top:498.05px;background:#f0f0f0"><svg class="ico" style="" width="20.5" height="19.2" viewBox="0 0 20 19" preserveAspectRatio="none"><defs><linearGradient id="tb21" x1="0" y1="0" x2="1" y2="0"><stop offset="0" stop-color="#38d4ff"/><stop offset=".45" stop-color="#2f86ea"/><stop offset="1" stop-color="#1f3fc8"/></linearGradient><linearGradient id="fr21" x1="0" y1="0" x2="1" y2="1"><stop offset="0" stop-color="#3f9ff2"/><stop offset="1" stop-color="#3460dc"/></linearGradient><linearGradient id="og21" x1="0" y1="0" x2="1" y2="0"><stop offset="0" stop-color="#b8a070"/><stop offset="1" stop-color="#a08860"/></linearGradient><linearGradient id="of21" x1="0" y1="0" x2="0" y2="1"><stop offset="0" stop-color="#c4cbd8"/><stop offset="1" stop-color="#c8c4b0"/></linearGradient></defs><rect x="0.7" y="0.7" width="18.6" height="17.6" rx="1" fill="#b9d4f2" stroke="url(#fr21)" stroke-width="1.4"/><rect x="0.2" y="0.2" width="19.6" height="3.4" rx="0.8" fill="url(#tb21)"/><path d="M3 8 L5.6 5.6 H13.2 V10.6 H5.6 Z" fill="url(#of21)" stroke="url(#og21)" stroke-width="1.3" stroke-linejoin="round"/><path d="M7 11 H14.8 L17.4 13.6 L14.8 16.2 H7 Z" fill="#cfc0dc" stroke="#a03c6c" stroke-width="1.4" stroke-linejoin="round"/><path d="M8.6 13.6H14" stroke="#fff" stroke-width="1.6" opacity="0.3"/></svg><span class="c" style="left:32.5px">16</span><span class="c" style="left:155.5px;letter-spacing:0.782px">ptr_obj</span></div>

<div id="dlg"><div id="dtitle"><svg class="abs" style="left:10px;top:6.9px" width="23" height="23" viewBox="0 0 23 23"><defs><radialGradient id="fc" cx=".45" cy=".35" r=".75"><stop offset="0" stop-color="#ecd6c8"/><stop offset=".7" stop-color="#d2ab98"/><stop offset="1" stop-color="#a87868"/></radialGradient></defs><path d="M1.500 9.200C.6 4.200 4.400.5 9.600.7c3.300-.2 5.900 1.100 7.200 3.100 2.900-.4 4.600 2.300 3.800 5.200.1 2.700-1.800 4.300-4 4-.9 1.500-2.700 2-3.900 1.100L3.400 14C2.200 12.800 1.600 11 1.500 9.200z" fill="#241a18"/><ellipse cx="7.7" cy="10.100" rx="4.700" ry="6.800" fill="url(#fc)"/><path d="M2.800 6.500C3.400 3.600 6 2 9 2.200c2.600.3 4.600 2.300 5.200 5.200C12.400 5.400 10 4.400 7.600 4.600 5.600 4.700 3.900 5.300 2.800 6.500z" fill="#2a1e1c"/><path d="M4.200 17.800C6 19.300 9.300 19.500 11.200 18l2.500 3.800H3.400z" fill="#dcc2b4"/><ellipse cx="4.700" cy="13.600" rx="1.100" ry=".7" fill="#b8442e"/><ellipse cx="5.1" cy="8.9" rx="1.1" ry=".6" fill="#6a463a" opacity=".75"/><ellipse cx="9.3" cy="8.500" rx="1.200" ry=".6" fill="#6a463a" opacity=".75"/><path d="M6.600 10.500c.3.800.2 1.400-.5 1.900" stroke="#a87868" stroke-width=".6" fill="none"/><text x="7.600" y="20.600" font-family="Liberation Sans, sans-serif" font-weight="bold" font-size="11.200" fill="#e43a24" stroke="#e43a24" stroke-width=".35" textLength="12.200" lengthAdjust="spacingAndGlyphs">64</text></svg><span>Please edit the type declaration</span></div><div id="ed"><div class="col1"></div><div class="col2"></div><div class="ln" style="top:6.85px"><span class="of" style="left:0.6px">Offset</span><span class="sz" style="left:59.8px">Size</span><span class="cd"><i class="k">struct</i> ptr_obj</span></div>
<div class="ln" style="top:25.96px"><span class="cd">{</span></div>
<div class="ln" style="top:45.07px"><span class="of">  0000</span><span class="sz">0004</span><span class="cd">  <i class="k">int</i> state;</span></div>
<div class="ln" style="top:64.18px"><span class="of">  0004</span><span class="sz">0004</span><span class="cd">  <i class="k">char</i> pad0[<i class="n">4</i>];</span></div>
<div class="ln" style="top:83.29px"><span class="of">  0008</span><span class="sz">0020</span><span class="cd">  <i class="k">char</i> name[<i class="n">32</i>];</span></div>
<div class="ln" style="top:102.40px"><span class="of">  0028</span><span class="sz">0004</span><span class="cd">  <i class="k">int</i> attr1;</span></div>
<div class="ln" style="top:121.51px"><span class="of">  002C</span><span class="sz">0004</span><span class="cd">  <i class="k">int</i> attr2;</span></div>
<div class="ln" style="top:140.62px"><span class="of">  0030</span><span class="sz">0020</span><span class="cd">  <i class="k">char</i> desc[<i class="n">32</i>];</span></div>
<div class="ln" style="top:159.73px"><span class="of">  0050</span><span class="sz">0008</span><span class="cd">  void (__fastcall *func)(<i class="k">char</i> *);</span></div>
<div class="ln" style="top:178.84px"><span class="sz">0058</span><span class="cd">};</span></div></div></div>

<svg class="abs" style="left:597px;top:496px" width="37" height="32" viewBox="0 0 37 32"><path d="M13.2 2.2C6.4 2.2 1 6.6 1 12.2c0 3.1 1.7 5.9 4.4 7.7l-1.3 3.9 4.6-2.4c1.2.4 2.4.6 3.7.7-.3-.9-.4-1.800-.4-2.700 0-5.400 5-9.700 11.200-9.700.6 0 1.200 0 1.800.1C24 5.400 19.100 2.200 13.200 2.200z" fill="#b2b2b2"/><circle cx="9.100" cy="8.800" r="1.600" fill="#fff"/><circle cx="17.300" cy="8.800" r="1.600" fill="#fff"/><path d="M35.500 19.600c0-4.700-4.600-8.500-10.300-8.500s-10.300 3.800-10.300 8.500 4.600 8.500 10.300 8.500c1.200 0 2.300-.2 3.400-.500l3.700 2-1-3.300c2.500-1.500 4.200-4 4.200-6.700z" fill="#b2b2b2" stroke="#fff" stroke-width="1.200"/><circle cx="21.800" cy="17.300" r="1.350" fill="#fff"/><circle cx="28.600" cy="17.300" r="1.350" fill="#fff"/></svg><div id="wm">公众号 · 珂技知识分享</div>
</body>
</html>
